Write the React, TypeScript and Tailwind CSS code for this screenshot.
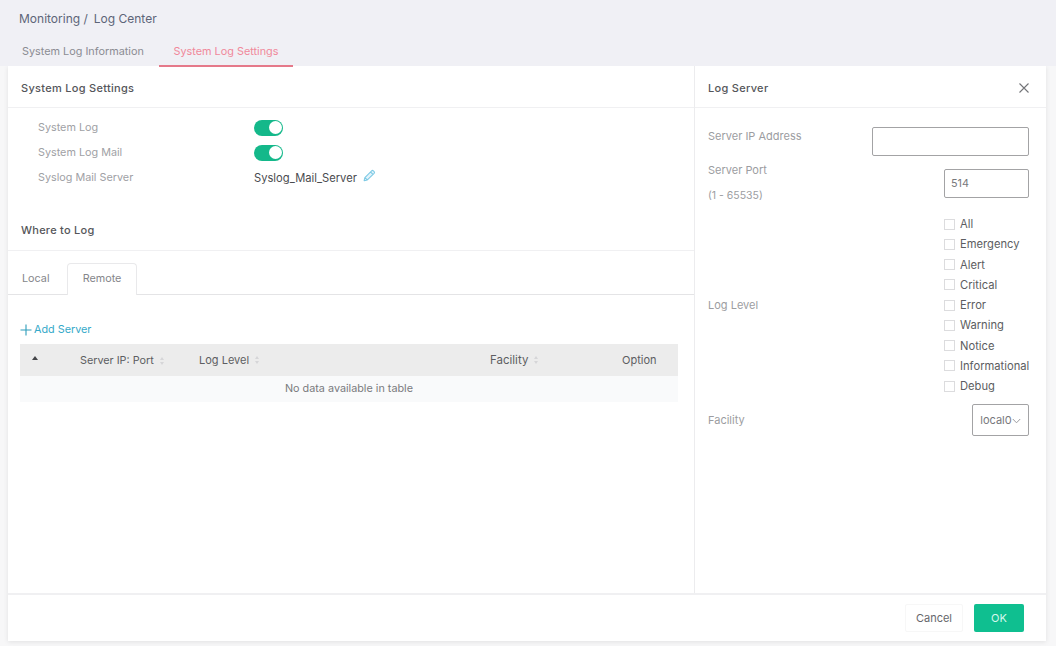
import { useState } from "react";

const LOG_LEVELS = [
  "All",
  "Emergency",
  "Alert",
  "Critical",
  "Error",
  "Warning",
  "Notice",
  "Informational",
  "Debug",
];

interface ToggleProps {
  label: string;
}

function Toggle({ label }: ToggleProps) {
  const [on, setOn] = useState(true);

  return (
    <button
      type="button"
      role="switch"
      aria-checked={on}
      aria-label={label}
      onClick={() => setOn(!on)}
      className={`flex h-4 w-[29px] items-center rounded-full p-px ${
        on ? "justify-end bg-[#14b88a]" : "justify-start bg-gray-300"
      }`}
    >
      <span className="size-[13px] rounded-full bg-white" />
    </button>
  );
}

function SortIcon() {
  return (
    <svg viewBox="0 0 6 10" className="ml-[5px] h-2.5 w-1.5 fill-[#d6d6d8]" aria-hidden="true">
      <path d="M3 1 5 4H1zM3 9 1 6h4z" />
    </svg>
  );
}

function PencilIcon() {
  return (
    <svg
      viewBox="0 0 14 14"
      className="mb-1 ml-1.5 size-[13px] fill-[#e3f3fa] stroke-[#7cc9e4]"
      strokeWidth="1.1"
      strokeLinejoin="round"
      aria-hidden="true"
    >
      <path d="M1.2 12.6 2 9.2 9.3 1.9a1.3 1.3 0 0 1 1.8 0l.9.9a1.3 1.3 0 0 1 0 1.8L4.7 11.8zM8 3.2l2.7 2.7M2 9.2l2.7 2.6" />
    </svg>
  );
}

function SettingsPanel() {
  return (
    <section className="w-[687px] shrink-0 border-r border-[#ececee]">
      <h2 className="flex h-[42px] items-center border-b border-[#f0f0f2] pt-0.5 pl-[13px] font-medium tracking-[0.3px] text-[#55565a]">
        System Log Settings
      </h2>

      <dl className="grid grid-cols-[216px_1fr] auto-rows-[25px] items-center pt-[7px] pl-[30px] text-[10.8px] text-[#a0a1a5]">
        <dt className="pt-px">System Log</dt>
        <dd>
          <Toggle label="System Log" />
        </dd>
        <dt className="pt-px">System Log Mail</dt>
        <dd>
          <Toggle label="System Log Mail" />
        </dd>
        <dt className="pt-px">Syslog Mail Server</dt>
        <dd className="flex items-center text-[11.2px] text-[#4a4b4f]">
          Syslog_Mail_Server
          <PencilIcon />
        </dd>
      </dl>

      <h2 className="mt-[19px] flex h-[42px] items-center border-b border-[#f0f0f2] pl-[13px] font-medium tracking-[0.25px] text-[#55565a]">
        Where to Log
      </h2>

      <div className="mt-3 flex h-8 text-[10.8px] text-[#85868a]">
        <div className="flex w-[59px] items-center border-b border-[#e4e4e6] pl-3.5">Local</div>
        <div className="flex w-[70px] items-center justify-center rounded-t-sm border border-b-0 border-[#e9e9eb] pb-0.5">
          Remote
        </div>
        <div className="flex-1 border-b border-[#e4e4e6]" />
      </div>

      <div className="mt-[27px] flex h-4 items-center pl-3 text-[10.8px] text-[#35a9c9]">
        <svg viewBox="0 0 12 12" className="mr-0.5 size-3 stroke-[#2e9dbb]" strokeWidth="1.1" aria-hidden="true">
          <path d="M6 .5v11M.5 6h11" />
        </svg>
        Add Server
      </div>

      <table className="mt-1.5 ml-3 w-[658px] table-fixed text-left text-[#5d5e62]">
        <thead>
          <tr className="h-8 bg-[#ececec]">
            <th className="w-[60px] pl-3">
              <svg viewBox="0 0 6 4" className="mb-1 h-1 w-1.5 fill-[#444548]" aria-hidden="true">
                <path d="M3 0 6 4H0z" />
              </svg>
            </th>
            <th className="w-[119px] pt-px text-[10.8px] font-normal">
              <span className="flex items-center">
                Server IP: Port
                <SortIcon />
              </span>
            </th>
            <th className="w-[291px] font-normal">
              <span className="flex items-center">
                Log Level
                <SortIcon />
              </span>
            </th>
            <th className="w-[132px] text-[11.5px] font-normal">
              <span className="flex items-center">
                Facility
                <SortIcon />
              </span>
            </th>
            <th className="font-normal">Option</th>
          </tr>
        </thead>
        <tbody>
          <tr className="h-[26px] bg-[#f9fafb]">
            <td colSpan={5} className="text-center text-[10.8px] text-[#797a7e]">
              No data available in table
            </td>
          </tr>
        </tbody>
      </table>
    </section>
  );
}

function ServerPanel() {
  return (
    <aside className="min-w-0 flex-1 text-[#9c9da1]">
      <div className="flex h-[42px] items-center justify-between border-b border-[#f0f0f2] pt-0.5 pr-4 pl-[13px]">
        <h2 className="font-medium tracking-[0.3px] text-[#55565a]">Log Server</h2>
        <button type="button" aria-label="Close">
          <svg viewBox="0 0 12 12" className="size-3 stroke-[#737478]" strokeWidth="1.1" aria-hidden="true">
            <path d="m1.5 1.5 9 9M10.5 1.5l-9 9" />
          </svg>
        </button>
      </div>

      <div className="pr-[17px] pl-[13px]">
        <div className="mt-[19px] flex justify-between">
          <label htmlFor="server-ip" className="leading-[18px]">
            Server IP Address
          </label>
          <input id="server-ip" className="h-[29px] w-[157px] rounded-xs border border-[#a3a3a5] px-1.5" />
        </div>

        <div className="mt-0.5 flex h-[54px] justify-between">
          <label htmlFor="server-port" className="leading-[25px]">
            Server Port
            <span className="block text-[10.5px]">(1 - 65535)</span>
          </label>
          <input
            id="server-port"
            defaultValue="514"
            className="mt-[11px] h-[29px] w-[85px] rounded-xs border border-[#a3a3a5] px-1.5 text-[10.8px] text-[#77787c]"
          />
        </div>

        <div className="mt-0.5 flex items-center justify-between">
          <span>Log Level</span>
          <ul className="w-[85px]">
            {LOG_LEVELS.map((level) => (
              <li key={level} className="h-[20.25px]">
                <label className="flex h-full items-center gap-[5px] text-[11.2px] whitespace-nowrap text-[#5c5d61]">
                  <input
                    type="checkbox"
                    className="size-[11px] shrink-0 appearance-none border border-[#dcdcde] checked:bg-[#14b88a]"
                  />
                  {level}
                </label>
              </li>
            ))}
          </ul>
        </div>

        <div className="mt-2 flex items-center justify-between">
          <span>Facility</span>
          <button
            type="button"
            className="flex h-8 w-[57px] items-center justify-center rounded-xs border border-[#a3a3a5] text-[#77787c]"
          >
            local0
            <svg viewBox="0 0 9 6" className="mt-0.5 h-1.5 w-[9px] fill-none stroke-[#9b9ca0]" aria-hidden="true">
              <path d="m.8 1 3.7 3.8L8.2 1" />
            </svg>
          </button>
        </div>
      </div>
    </aside>
  );
}

export default function App() {
  return (
    <div className="flex h-[646px] w-[1056px] flex-col overflow-hidden bg-[#f7f7f8] font-[Inter,'Liberation_Sans',sans-serif] text-[11px] leading-4">
      <header className="relative z-10 h-[66px] shrink-0 bg-[#f0f0f5] pl-2">
        <div className="flex h-[38px] items-center gap-1.5 pl-[11px] text-[12px] text-[#5d6578]">
          <span>Monitoring /</span>
          <span>Log Center</span>
        </div>
        <nav className="flex h-[29px] text-[10.85px]">
          <a className="flex w-[151px] items-center pb-1 pl-3.5 text-[#8b8c93]">System Log Information</a>
          <a className="flex w-[134px] items-center justify-center border-b-2 border-[#e5798a] pb-0.5 text-[#f0899b]">
            System Log Settings
          </a>
        </nav>
      </header>

      <main className="ml-2 flex h-[575px] w-[1038px] shrink-0 flex-col shadow-[0_1px_5px_rgba(0,0,0,0.09)]">
        <div className="flex min-h-0 flex-1 bg-white">
          <SettingsPanel />
          <ServerPanel />
        </div>
        <footer className="flex h-[48px] shrink-0 items-center justify-end gap-[11px] border-t-2 border-[#f0f0f2] bg-white pr-[22px]">
          <button
            type="button"
            className="h-7 w-[58px] rounded-xs border border-[#f7f7f7] text-[#66676b]"
          >
            Cancel
          </button>
          <button type="button" className="h-7 w-[50px] rounded-xs bg-[#0fbf90] text-[#d5f7ec]">
            OK
          </button>
        </footer>
      </main>
    </div>
  );
}
